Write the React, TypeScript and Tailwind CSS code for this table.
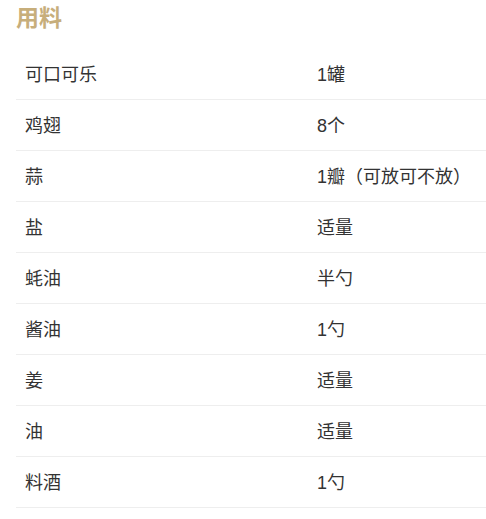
const rows: [string, string][] = [
  ['可口可乐', '1罐'],
  ['鸡翅', '8个'],
  ['蒜', '1瓣（可放可不放）'],
  ['盐', '适量'],
  ['蚝油', '半勺'],
  ['酱油', '1勺'],
  ['姜', '适量'],
  ['油', '适量'],
  ['料酒', '1勺'],
];

export default function App() {
  return (
    <div className="bg-white min-h-screen pl-4 font-['Liberation_Sans','Noto_Sans_CJK_SC',sans-serif] text-[#333]">
      <h2 className="pt-[2px] h-[49px] text-[23px] leading-[32px] font-bold text-[#c7ae7b]">用料</h2>
      <div>
        {rows.map(([name, amount]) => (
          <div key={name} className="grid grid-cols-[292px_1fr] h-[51px] items-center border-b border-[#eeeeee] px-[9px] pt-[2px] text-[18px]">
            <span>{name}</span>
            <span>{amount}</span>
          </div>
        ))}
      </div>
    </div>
  );
}
